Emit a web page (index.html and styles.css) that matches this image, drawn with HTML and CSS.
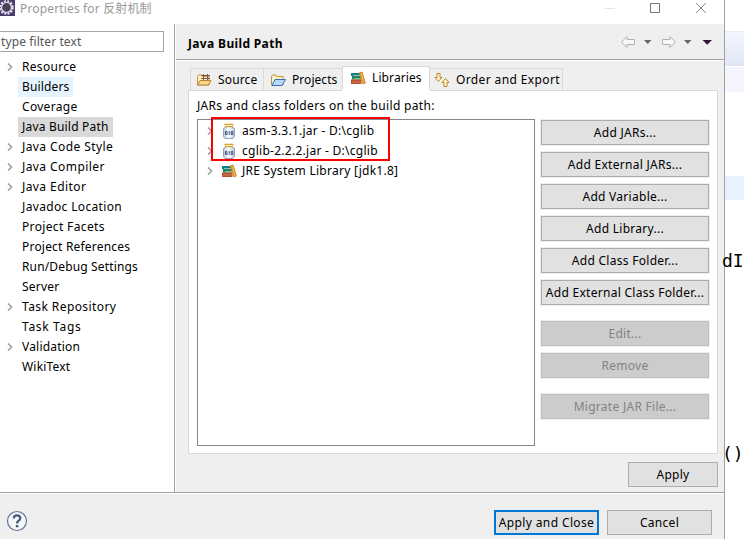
FILE: index.html
```html
<!DOCTYPE html>
<html lang="en">
<head>
<meta charset="utf-8">
<title>Properties</title>
<link rel="stylesheet" href="styles.css">
</head>
<body>
<svg class="defs" width="0" height="0">
  <defs>
    <linearGradient id="glass" x2="1"><stop stop-color="#b4c6de"/><stop offset=".45" stop-color="#fff"/><stop offset="1" stop-color="#b4c6de"/></linearGradient>
    <symbol id="chev" viewBox="0 0 6 8"><path d="M1 .5 4.500 4 1 7.500" fill="none" stroke="#a3a3a3" stroke-width="1.700"/></symbol>
    <symbol id="jar" viewBox="0 0 14 16">
      <path d="M3.500 3.500h7L12.500 6v7.500l-1.500 2H3l-1.500-2V6z" fill="url(#glass)" stroke="#8da0bf"/>
      <path d="M2.500 1.500h9M3 3.500h8" stroke="#d3a13a" stroke-width="1.400"/>
      <path d="M3.500 2.500h7" stroke="#fff3bf"/>
      <path d="M3.500 8.500h1.500v3H3.500zM7.200 8v4M9.300 8.500h1.500v3H9.300z" fill="none" stroke="#33486e" stroke-width=".9"/>
    </symbol>
    <symbol id="books" viewBox="0 0 16 14">
      <path d="M1 2h9v3H1z" fill="#157f88"/>
      <path d="M3 4.500h7" stroke="#8fc4bf"/>
      <path d="M2 5h9v3.500H2z" fill="#23845e"/>
      <path d="M4 7.500h7" stroke="#7cbb92"/>
      <path d="M1 8.500h10.500V13H1z" fill="#b9512f"/>
      <path d="M2 11h9" stroke="#d07e55"/>
      <path d="M9.500 1.800 12 1l3.300 11-2.300.9z" fill="#f6b24a" stroke="#cf8428"/>
    </symbol>
    <symbol id="folder" viewBox="0 0 16 14">
      <path d="M1.500 12V3.500L2.500 2h3.300l1 1.500H13V12z" fill="#fff1bf" stroke="#c2914a"/>
    </symbol>
  </defs>
</svg>
<div class="screen">
  <main class="dialog">
    <header class="titlebar">
      <svg class="app" width="15" height="17" viewBox="0 0 15 17"><path d="M0 0h15v16H0z" fill="#493c6c"/><circle cx="6.500" cy="7.500" r="6.300" fill="none" stroke="#ece8f4" stroke-width="2" stroke-dasharray="2 1.300"/><circle cx="6.500" cy="7.500" r="5" fill="#4a4356" stroke="#e5e1ed" stroke-width="1.200"/></svg>
      <span class="caption">Properties for <b>反射机制</b></span>
      <svg class="winctl" width="110" height="17" viewBox="0 0 110 17" fill="none"><path d="M5 8.500h10" stroke="#e4e4e4"/><path d="M50.500 3.500h9v9h-9z" stroke="#777"/><path d="m96 3 10 10M106 3 96 13" stroke="#888"/></svg>
    </header>
    <div class="content">
      <nav class="side">
        <div class="filter">type filter text</div>
        <ul class="nav">
          <li><i><svg><use href="#chev"/></svg></i><span>Resource</span></li>
          <li><i></i><span class="hover s0">Builders</span></li>
          <li><i></i><span>Coverage</span></li>
          <li><i></i><span class="current s1">Java Build Path</span></li>
          <li><i><svg><use href="#chev"/></svg></i><span class="s3">Java Code Style</span></li>
          <li><i><svg><use href="#chev"/></svg></i><span class="s3">Java Compiler</span></li>
          <li><i><svg><use href="#chev"/></svg></i><span class="s3">Java Editor</span></li>
          <li><i></i><span class="s2">Javadoc Location</span></li>
          <li><i></i><span class="s2">Project Facets</span></li>
          <li><i></i><span class="s1">Project References</span></li>
          <li><i></i><span class="s0">Run/Debug Settings</span></li>
          <li><i></i><span class="s1">Server</span></li>
          <li><i><svg><use href="#chev"/></svg></i><span class="s3">Task Repository</span></li>
          <li><i></i><span class="s4">Task Tags</span></li>
          <li><i><svg><use href="#chev"/></svg></i><span class="s1">Validation</span></li>
          <li><i></i><span class="s1">WikiText</span></li>
        </ul>
      </nav>
      <section class="page">
        <div class="pagehead">
          <h1>Java Build Path</h1>
          <svg width="96" height="16" viewBox="0 0 96 16">
            <g fill="#f8f8f8" stroke="#b0b0b0"><path d="M1.500 8 7 2.500v3h7.500v5H7v3z"/><path d="M55.500 8 50 2.500v3h-7.500v5H50v3z"/></g>
            <path d="M24 6h7.500l-3.750 4zM64 6h7.500l-3.750 4z" fill="#666"/><path d="M82.500 6h9.500l-4.750 4.800z" fill="#30183c"/>
          </svg>
        </div>
        <div class="tabs">
          <div class="tab source"><svg width="16" height="14" viewBox="0 0 16 14"><use href="#folder" width="16" height="14"/><path d="M5 2.500h9M5 5.500h9M7.500 1v7M11.500 1v7" stroke="#7a5a46"/><path d="M1.500 12 4 7.500h11L12.500 12z" fill="#f8d78a" stroke="#b98332"/></svg><span>Source</span></div>
          <div class="tab projects"><svg width="16" height="14" viewBox="0 0 16 14"><use href="#folder" width="16" height="14"/><path d="M2 12.500 5 6.500h10.500L12 12.500z" fill="#b9d8fa" stroke="#386fae"/></svg><span>Projects</span></div>
          <div class="tab libraries"><svg width="16" height="14"><use href="#books"/></svg><span>Libraries</span></div>
          <div class="tab order"><svg width="16" height="16" viewBox="0 0 16 16" fill="#fff4c8" stroke="#b98a25"><path d="M3 1.500h3v4h2L4.500 9.500 1 5.500h2z"/><path d="M10 14.500h3v-4h2L11.500 6.500 8 10.500h2z"/></svg><span>Order and Export</span></div>
        </div>
        <div class="panel">
          <p class="label">JARs and class folders on the build path:</p>
          <div class="columns">
            <div class="list">
              <div class="entry"><svg class="chev"><use href="#chev"/></svg><svg class="ico" width="14" height="16"><use href="#jar"/></svg><span>asm-3.3.1.jar - D:\cglib</span></div>
              <div class="entry"><svg class="chev"><use href="#chev"/></svg><svg class="ico" width="14" height="16"><use href="#jar"/></svg><span>cglib-2.2.2.jar - D:\cglib</span></div>
              <div class="entry"><svg class="chev"><use href="#chev"/></svg><svg class="ico wide" width="16" height="14"><use href="#books"/></svg><span>JRE System Library [jdk1.8]</span></div>
              <div class="mark"></div>
            </div>
            <div class="buttons">
              <button>Add JARs...</button>
              <button>Add External JARs...</button>
              <button>Add Variable...</button>
              <button>Add Library...</button>
              <button>Add Class Folder...</button>
              <button>Add External Class Folder...</button>
              <button class="gap" disabled>Edit...</button>
              <button disabled>Remove</button>
              <button class="gap" disabled>Migrate JAR File...</button>
            </div>
          </div>
        </div>
        <div class="applyrow"><button>Apply</button></div>
      </section>
    </div>
    <footer class="footer">
      <svg width="22" height="22" viewBox="0 0 22 22"><circle cx="11" cy="11" r="9.500" fill="#f5f6f8" stroke="#637894" stroke-width="1.200"/><path d="M7.800 8.400Q7.800 5.300 11 5.300t3.300 2.800q0 1.700-1.700 2.700-1.500.9-1.500 2.600" fill="none" stroke="#465d82" stroke-width="2.300"/><path d="M9.800 15h2.500v2.300H9.800z" fill="#465d82"/></svg>
      <button class="default">Apply and Close</button>
      <button>Cancel</button>
    </footer>
  </main>
  <aside class="editor">
    <div class="strip1"></div><div class="strip2"></div><div class="hl"></div>
    <code class="c1">dI</code><code class="c2">()</code>
  </aside>
</div>
</body>
</html>
```
FILE: styles.css
```css
* { box-sizing: border-box; }
body { margin: 0; overflow: hidden; background: #fff; color: #000; font: 12px/20px "Noto Sans", "Noto Sans CJK SC", sans-serif; letter-spacing: .15px; }
svg { display: block; flex: none; }
.defs { position: absolute; }
.screen { display: flex; width: 744px; height: 539px; overflow: hidden; }
.dialog { width: 725px; flex: none; border-right: 1px solid #a0a0a0; display: flex; flex-direction: column; background: #efefef; }
.titlebar { height: 24px; background: #fff; display: flex; align-items: flex-start; }
.caption { margin-left: 5px; line-height: 18px; color: #999; flex: 1; white-space: nowrap; letter-spacing: .15px; }
.caption b { font-weight: 400; }
.winctl { margin-right: 14px; }
.content { height: 468px; display: flex; }
.side { width: 175px; background: #fff; border-right: 1px solid #a0a0a0; padding-top: 7px; }
.filter { width: 164px; height: 21px; border: 1px solid #a5a5a5; border-left: 0; line-height: 20px; padding-left: 1px; color: #555; letter-spacing: .1px; }
.nav { list-style: none; margin: 5px 0 0; padding: 0; }
.nav li { display: flex; height: 20px; white-space: nowrap; }
.nav i { width: 18px; padding: 6px 0 0 7px; }
.nav svg, .chev { width: 6px; height: 8px; }
.nav span { padding: 0 4px; letter-spacing: .3px; }
.nav .s0 { letter-spacing: .15px; }
.nav .s1 { letter-spacing: .2px; }
.nav .s2 { letter-spacing: .35px; }
.nav .s3 { letter-spacing: .42px; }
.nav .s4 { letter-spacing: .68px; }
.hover { background: #e5f3ff; }
.current { background: #d9d9d9; }
.page { width: 549px; border-left: 1px solid #fff; }
.pagehead { height: 37px; border-bottom: 1px solid #fff; box-shadow: inset 0 -1px #a0a0a0; display: flex; align-items: center; justify-content: space-between; padding: 0 8px 0 12px; }
h1 { margin: 3px 0 0; font-size: 12px; line-height: 20px; font-weight: 700; letter-spacing: .35px; }
.tabs { height: 29px; display: flex; align-items: flex-end; padding-left: 14px; position: relative; z-index: 1; }
.tab { height: 22px; border: 1px solid #d9d9d9; border-bottom: 0; border-right: 0; display: flex; align-items: center; white-space: nowrap; }
.tab span { margin-left: 6px; }
.source { width: 73px; padding-left: 5px; }
.projects { width: 79px; padding-left: 6px; letter-spacing: .05px; }
.libraries { width: 88px; height: 24px; padding: 0 0 2px 7px; background: #fff; border-right: 1px solid #d9d9d9; box-shadow: 0 1px #fff; letter-spacing: .1px; }
.order { width: 133px; padding-left: 4px; border-right: 1px solid #d9d9d9; border-left: 0; letter-spacing: .38px; }
.panel { margin-left: 12px; width: 530px; height: 364px; background: #fff; border: 1px solid #d9d9d9; padding: 5px 8px 0; }
.label { margin: 0; height: 23px; white-space: nowrap; letter-spacing: .32px; }
.columns { display: flex; gap: 6px; }
.list { width: 338px; height: 327px; border: 1px solid #828790; position: relative; padding-top: 1px; letter-spacing: .27px; }
.entry { height: 20px; display: flex; align-items: center; white-space: nowrap; }
.chev { margin-left: 9px; }
.ico { margin-left: 9px; }
.ico.wide { margin-left: 8px; }
.entry span { margin-left: 6px; }
.entry .wide + span { margin-left: 5px; }
.mark { position: absolute; left: 13px; top: -3px; width: 179px; height: 44px; border: 2px solid #f00; }
.buttons { width: 168px; display: flex; flex-direction: column; gap: 7px; padding-top: 1px; }
button { height: 25px; padding: 0; border: 1px solid #adadad; border-radius: 0; background: #e1e1e1; color: #000; font: inherit; letter-spacing: .28px; white-space: nowrap; }
.buttons button { box-shadow: 0 0 0 1px #efefef; }
button:disabled { background: #ccc; border-color: #bfbfbf; color: #838383; }
.buttons .gap { margin-top: 9px; }
.applyrow { padding: 8px 6px 0 0; display: flex; justify-content: flex-end; }
.applyrow button { width: 90px; }
.footer { height: 47px; border-top: 1px solid #a0a0a0; box-shadow: inset 0 1px #fff; display: flex; gap: 8px; padding: 17px 12px 0 6px; }
.footer svg { margin-right: auto; }
.footer button { width: 105px; }
.footer .default { border: 2px solid #0078d7; letter-spacing: .38px; }
.editor { width: 19px; flex: none; }
.strip1 { margin-top: 31px; height: 35px; border-top: 1px solid #eee; background: linear-gradient(#f5f7ff, #e0e5f5); }
.strip2 { height: 26px; border-top: 1px solid #fff; background: #f5f6fd; }
.hl { margin-top: 84px; height: 24px; background: #e8f2fe; }
.editor code { display: block; font: 18px/24px "DejaVu Sans Mono", monospace; margin-left: -3px; letter-spacing: 0; white-space: nowrap; }
.editor .c1 { margin-top: 49px; }
.editor .c2 { margin-top: 169px; }
```
